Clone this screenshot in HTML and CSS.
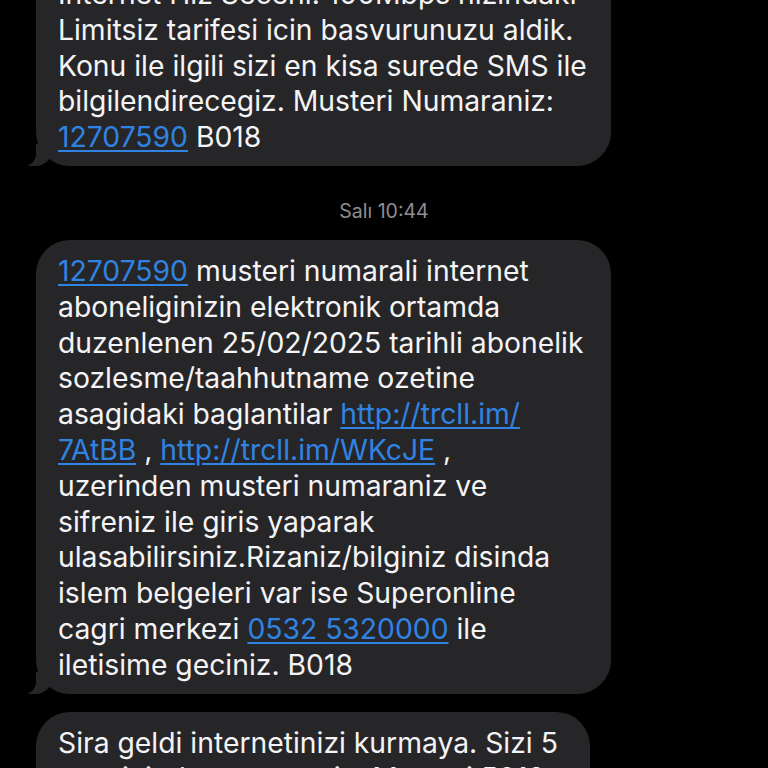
FILE: index.html
```html
<!DOCTYPE html>
<html lang="tr">
<head>
<meta charset="utf-8">
<title>Mesajlar</title>
<link rel="stylesheet" href="styles.css">
</head>
<body>
<main class="thread">
  <div class="bubble wide first tail">
    Internet Hiz Seceni. 100Mbps hizindaki<br>
    Limitsiz tarifesi icin basvurunuzu aldik.<br>
    Konu ile ilgili sizi en kisa surede SMS ile<br>
    bilgilendirecegiz. Musteri Numaraniz:<br>
    <a class="link">12707590</a> B018
  </div>
  <div class="stamp">Salı 10:44</div>
  <div class="bubble wide tail">
    <a class="link">12707590</a> musteri numarali internet<br>
    aboneliginizin elektronik ortamda<br>
    duzenlenen 25/02/2025 tarihli abonelik<br>
    sozlesme/taahhutname ozetine<br>
    asagidaki baglantilar <a class="link">http://trcll.im/<br>7AtBB</a> , <a class="link">http://trcll.im/WKcJE</a> ,<br>
    uzerinden musteri numaraniz ve<br>
    sifreniz ile giris yaparak<br>
    ulasabilirsiniz.Rizaniz/bilginiz disinda<br>
    islem belgeleri var ise Superonline<br>
    cagri merkezi <a class="link">0532 5320000</a> ile<br>
    iletisime geciniz. B018
  </div>
  <div class="bubble next">
    Sira geldi internetinizi kurmaya. Sizi 5<br>
    saat icinde arayacagiz. Musteri 5018
  </div>
</main>
</body>
</html>
```
FILE: styles.css
```css
html, body {
  margin: 0;
  padding: 0;
  background: #000;
  height: 768px;
  overflow: hidden;
}
.thread {
  display: flex;
  flex-direction: column;
  align-items: flex-start;
  font-family: Inter, "Noto Sans", sans-serif;
  font-size: 28.3px;
  line-height: 35.8px;
  color: #f4f4f6;
}
.bubble {
  position: relative;
  margin-left: 36px;
  background: #262628;
  border-radius: 34px;
  padding: 14px 22px 10px 22px;
  white-space: nowrap;
  box-sizing: border-box;
}
.wide {
  width: 575px;
}
.first {
  margin-top: -37px;
}
.next {
  margin-top: 18px;
  width: 554px;
}
.tail::before {
  content: "";
  position: absolute;
  left: -8px;
  bottom: 0;
  width: 24px;
  height: 22px;
  background: #262628;
  border-bottom-right-radius: 16px;
}
.tail::after {
  content: "";
  position: absolute;
  left: -14px;
  bottom: 0;
  width: 14px;
  height: 24px;
  background: #000;
  border-bottom-right-radius: 12px;
}
.link {
  color: #3083e2;
  text-decoration: underline;
  text-decoration-thickness: 2px;
  text-underline-offset: 3px;
}
.stamp {
  align-self: center;
  margin: 33px 0 17px;
  font-size: 19.5px;
  line-height: 24px;
  color: #8e8e93;
}
```
